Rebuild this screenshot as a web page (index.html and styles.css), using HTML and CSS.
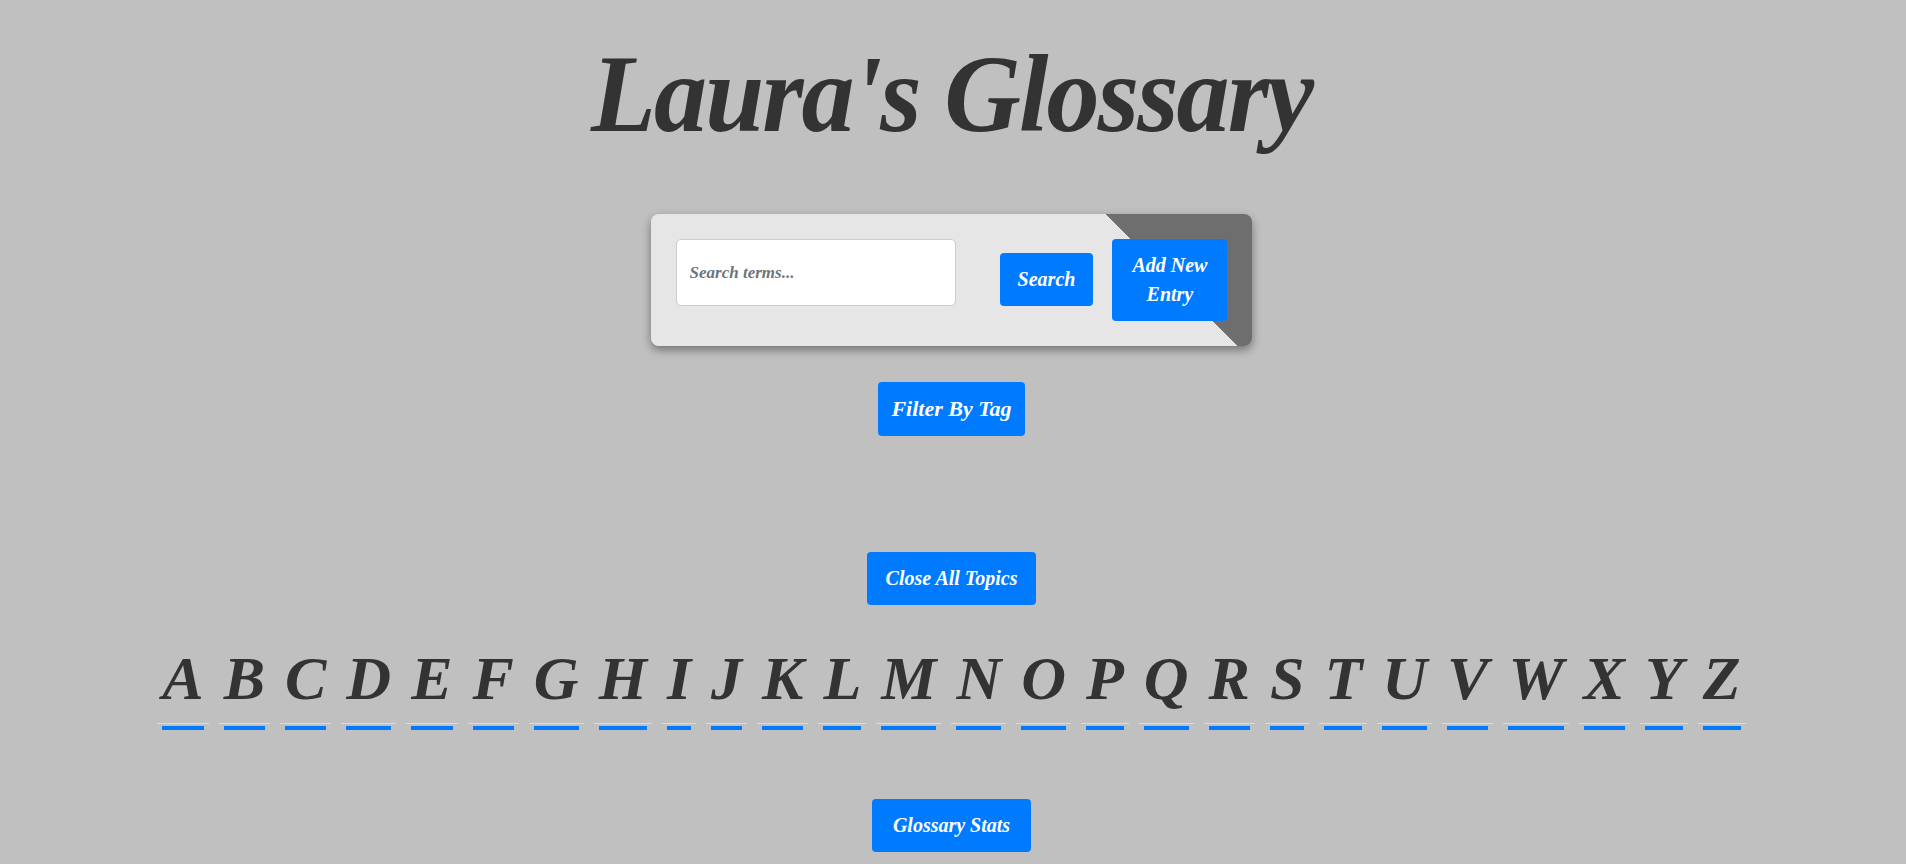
FILE: index.html
```html
<!DOCTYPE html>
<html lang="en">
<head>
<meta charset="utf-8">
<title>Laura's Glossary</title>
<link rel="stylesheet" href="styles.css">
</head>
<body>
<header class="site-header">
  <h1 class="title">Laura's Glossary</h1>
</header>
<main class="main">
  <section class="search-card">
    <input class="search-input" type="text" placeholder="Search terms...">
    <button class="btn btn-search">Search</button>
    <button class="btn btn-add">Add New Entry</button>
  </section>
  <button class="btn btn-filter">Filter By Tag</button>
  <button class="btn btn-close">Close All Topics</button>
  <nav class="alphabet">
    <a class="letter"><span class="letter-char">A</span></a>
    <a class="letter"><span class="letter-char">B</span></a>
    <a class="letter"><span class="letter-char">C</span></a>
    <a class="letter"><span class="letter-char">D</span></a>
    <a class="letter"><span class="letter-char">E</span></a>
    <a class="letter"><span class="letter-char">F</span></a>
    <a class="letter"><span class="letter-char">G</span></a>
    <a class="letter"><span class="letter-char">H</span></a>
    <a class="letter"><span class="letter-char">I</span></a>
    <a class="letter"><span class="letter-char">J</span></a>
    <a class="letter"><span class="letter-char">K</span></a>
    <a class="letter"><span class="letter-char">L</span></a>
    <a class="letter"><span class="letter-char">M</span></a>
    <a class="letter"><span class="letter-char">N</span></a>
    <a class="letter"><span class="letter-char">O</span></a>
    <a class="letter"><span class="letter-char">P</span></a>
    <a class="letter"><span class="letter-char">Q</span></a>
    <a class="letter"><span class="letter-char">R</span></a>
    <a class="letter"><span class="letter-char">S</span></a>
    <a class="letter"><span class="letter-char">T</span></a>
    <a class="letter"><span class="letter-char">U</span></a>
    <a class="letter"><span class="letter-char">V</span></a>
    <a class="letter"><span class="letter-char">W</span></a>
    <a class="letter"><span class="letter-char">X</span></a>
    <a class="letter"><span class="letter-char">Y</span></a>
    <a class="letter"><span class="letter-char">Z</span></a>
  </nav>
  <button class="btn btn-stats">Glossary Stats</button>
</main>
</body>
</html>
```

FILE: styles.css
```css
html, body {
  margin: 0;
  padding: 0;
}

body {
  background: #c0c0c0;
  color: #333333;
  font-family: "Liberation Serif", "Times New Roman", serif;
  font-style: italic;
  font-weight: bold;
}

.site-header {
  display: flex;
  justify-content: center;
  padding-right: 3px;
}

.title {
  margin: 29px 0 0;
  font-size: 110px;
  line-height: 130px;
  letter-spacing: -2px;
  font-weight: bold;
  font-style: italic;
  color: #333333;
  transform: scaleX(0.965);
}

.main {
  display: flex;
  flex-direction: column;
  align-items: center;
  padding-right: 3px;
}

.search-card {
  margin-top: 55px;
  display: flex;
  align-items: flex-start;
  padding: 25px;
  border-radius: 8px;
  background: linear-gradient(45deg, #e6e6e6 415px, #6e6e6e 415px);
  box-shadow: 0 4px 10px rgba(0, 0, 0, 0.4);
}

.search-input {
  box-sizing: border-box;
  width: 280px;
  height: 67px;
  margin: 0 44px 0 0;
  padding: 0 13px;
  border: 1px solid #cccccc;
  border-radius: 5px;
  background: #ffffff;
  font-family: "Liberation Serif", "Times New Roman", serif;
  font-style: italic;
  font-weight: bold;
  font-size: 17px;
  color: #333333;
  outline: none;
}

.search-input::placeholder {
  color: #6c757d;
}

.btn {
  border: none;
  border-radius: 4px;
  background: #007bff;
  color: #ffffff;
  font-family: "Liberation Serif", "Times New Roman", serif;
  font-style: italic;
  font-weight: bold;
  font-size: 20px;
  line-height: 29px;
  padding: 12px 19px;
  cursor: pointer;
}

.btn-search {
  margin: 14px 19px 0 0;
  padding: 12px 18px;
}

.btn-add {
  box-sizing: border-box;
  width: 115px;
  padding: 12px 16px;
}

.btn-filter {
  margin-top: 36px;
  font-size: 22px;
  line-height: 30px;
  padding: 12px 13px;
}

.btn-close {
  margin-top: 116px;
  padding: 12px 19px;
}

.alphabet {
  margin-top: 36px;
  display: flex;
  gap: 10px;
}

.letter {
  display: flex;
  flex-direction: column;
  color: #333333;
  text-decoration: none;
  cursor: pointer;
}

.letter-char {
  font-size: 62px;
  line-height: 1.2;
  padding: 0 5px 8px;
  border-bottom: 1px solid #dcdcdc;
  text-align: center;
}

.letter::after {
  content: "";
  height: 4px;
  margin: 2px 5px 0;
  background: #007bff;
}

.btn-stats {
  margin-top: 69px;
  padding: 12px 21px;
}
```
